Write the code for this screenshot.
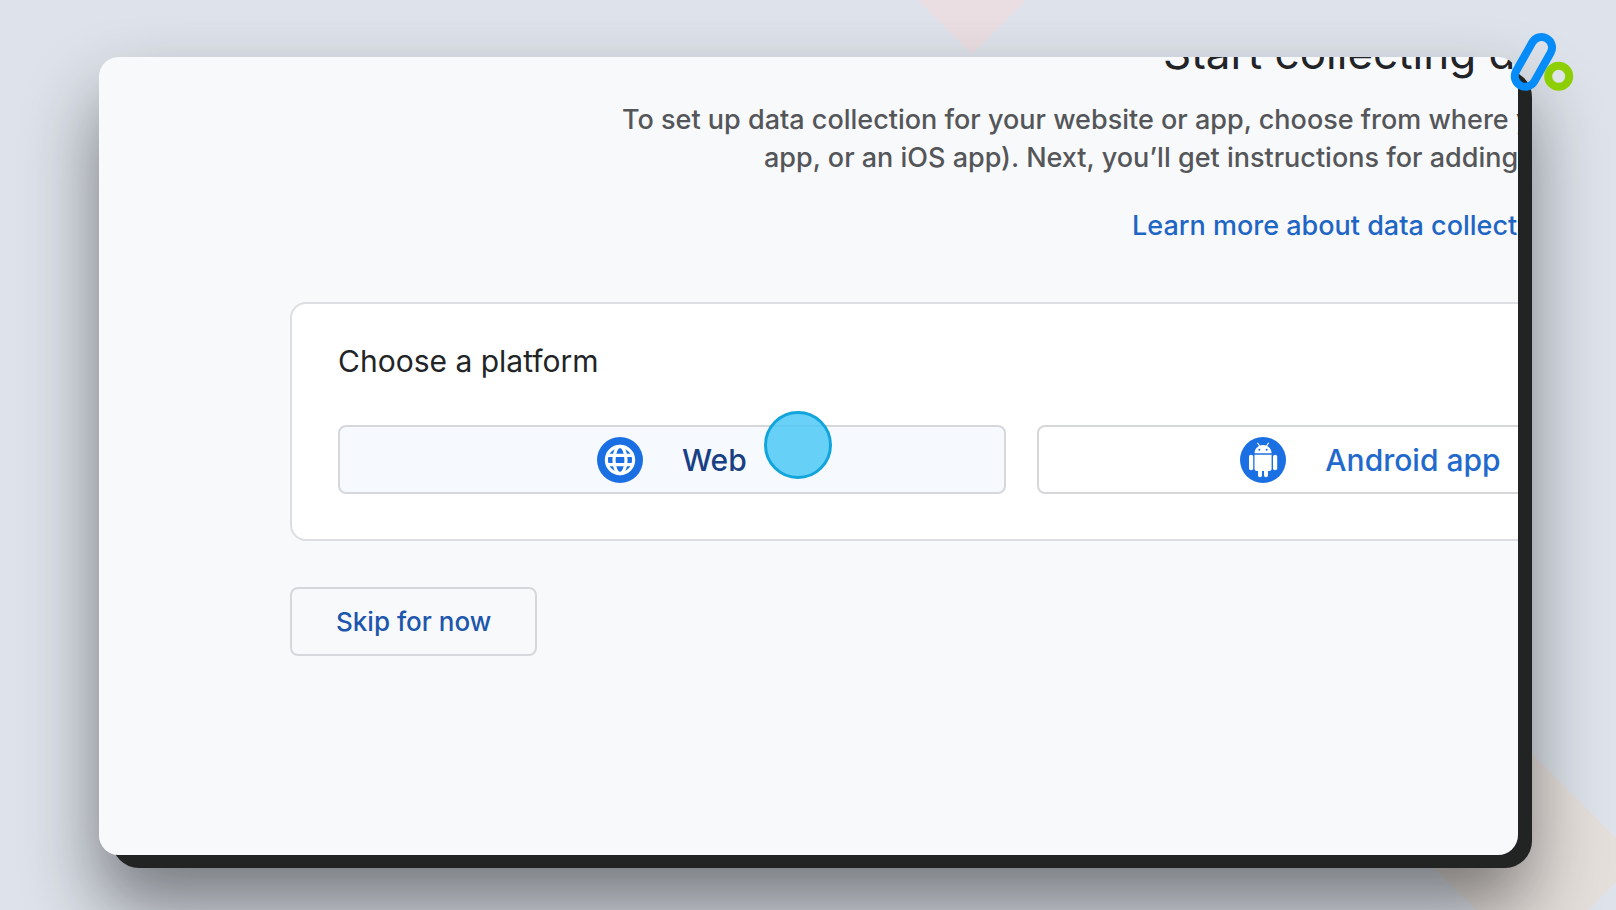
<script>
  const intro = [
    'To set up data collection for your website or app, choose from where y',
    'app, or an iOS app). Next, you’ll get instructions for adding'
  ];
</script>

<div class="stage">
  <span class="diamond rose"></span>
  <span class="diamond sand"></span>

  <div class="frame">
    <main class="window">
      <header>
        <h1>Start collecting d</h1>
        <p><span>{intro[0]}</span><span class="second">{intro[1]}</span></p>
        <a href="#learn">Learn more about data collect</a>
      </header>

      <section class="card" aria-labelledby="platform-title">
        <h2 id="platform-title">Choose a platform</h2>
        <div class="platforms">
          <button class="platform selected" type="button">
            <svg viewBox="0 0 46 46" aria-hidden="true">
              <circle cx="23" cy="23" r="23" fill="#1a6fe3" />
              <g fill="none" stroke="#fff" stroke-width="3.2">
                <circle cx="23" cy="23" r="13.6" />
                <ellipse cx="23" cy="23" rx="6" ry="13.6" />
                <path d="M10 18.3h26M10 27.7h26" />
              </g>
            </svg>
            <span>Web</span>
          </button>
          <button class="platform" type="button">
            <svg viewBox="0 0 46 46" aria-hidden="true">
              <circle cx="23" cy="23" r="23" fill="#1a6fe3" />
              <g fill="#fff">
                <path d="M14.5 16.3C14.7 12.6 16.4 10.2 19 9L17 6.1l.9-.6 2.1 3.1c1.9-.7 4.3-.7 6.2 0l2.1-3.1.9.6L27.2 9c2.6 1.2 4.2 3.6 4.4 7.3z" />
                <path d="M14.5 17.7h17.1v14.4a1.8 1.8 0 0 1-1.8 1.8H28v4.300a2 2 0 0 1-4 0v-4.300h-2v4.300a2 2 0 0 1-4 0v-4.300h-1.700a1.800 1.800 0 0 1-1.800-1.800z" />
                <rect x="9" y="17.7" width="4.2" height="15.5" rx="2" />
                <rect x="33" y="17.7" width="4.2" height="15.5" rx="2" />
              </g>
              <circle cx="19.3" cy="12.8" r="1" fill="#1a6fe3" />
              <circle cx="26.7" cy="12.8" r="1" fill="#1a6fe3" />
            </svg>
            <span>Android app</span>
          </button>
        </div>
      </section>

      <button class="skip" type="button">Skip for now</button>
    </main>
  </div>

  <span class="pointer"></span>

  <svg class="logo" viewBox="0 0 64 60" aria-hidden="true">
    <rect x="-10.5" y="-10.5" width="21" height="54" rx="10.5" transform="translate(31.5 15.5) rotate(29.5)" fill="none" stroke="#058cf8" stroke-width="8" />
    <circle cx="48.7" cy="44.3" r="10.5" fill="#dfe3ea" stroke="#8dcf04" stroke-width="8" />
  </svg>
</div>

<style>
  :global(body) {
    margin: 0;
  }
  .stage {
    position: relative;
    box-sizing: border-box;
    display: flex;
    min-height: 100vh;
    padding: 57px 98px 55px 99px;
    overflow: hidden;
    background: #dee3eb;
    font-family: Inter, sans-serif;
  }
  .diamond {
    position: absolute;
    width: 150px;
    height: 150px;
    transform: rotate(45deg);
  }
  .rose {
    top: -127px;
    left: 897px;
    background: #ebdee2;
  }
  .sand {
    right: 9px;
    bottom: -25px;
    background: #e5dfdb;
  }
  .frame {
    position: relative;
    display: flex;
    flex: 1;
    min-width: 0;
    border-radius: 20px;
    box-shadow: 5px 46px 76px 5px rgba(0, 0, 0, 0.48);
  }
  .frame::before {
    content: '';
    position: absolute;
    inset: 13px -14px -13px 13px;
    border-radius: 27px;
    background: #222323;
  }
  .window {
    position: relative;
    flex: 1;
    min-width: 0;
    overflow: hidden;
    border-radius: 20px;
    background: #f8f9fb;
  }
  header {
    white-space: nowrap;
    color: #545659;
    font-size: 27px;
    font-weight: 500;
    line-height: 38px;
  }
  h1 {
    margin: -32px 0 0 1064px;
    color: #222427;
    font-size: 44px;
    font-weight: 400;
    line-height: 56px;
  }
  p {
    display: grid;
    margin: 20px 0 0 523px;
  }
  .second {
    padding-left: 142px;
  }
  a {
    display: block;
    margin: 30px 0 0 1033px;
    color: #1f66c4;
    text-decoration: none;
  }
  .card {
    box-sizing: border-box;
    width: calc(152% + 4px);
    margin: 57px 0 0 191px;
    padding: 37px 46px 45px;
    border: 2px solid #dcdee1;
    border-radius: 16px;
    background: #fff;
  }
  h2 {
    margin: 0 0 44px;
    color: #222427;
    font-size: 30px;
    font-weight: 400;
    line-height: 40px;
  }
  .platforms {
    display: grid;
    grid-template-columns: repeat(3, 1fr);
    gap: 31px;
  }
  button {
    box-sizing: border-box;
    height: 69px;
    border: 2px solid #d5d7db;
    border-radius: 8px;
    background: transparent;
    font-family: inherit;
    font-weight: 500;
  }
  .platform {
    display: flex;
    align-items: center;
    justify-content: center;
    gap: 39px;
    color: #2269cd;
    font-size: 30px;
  }
  .platform svg {
    width: 46px;
    height: 46px;
  }
  .selected {
    background: #f6faff;
    color: #193f84;
  }
  .skip {
    margin: 46px 0 0 191px;
    padding: 0 44px;
    color: #1d56ad;
    font-size: 26px;
  }
  .pointer {
    position: absolute;
    top: 411px;
    left: 764px;
    box-sizing: border-box;
    width: 68px;
    height: 68px;
    border: 3px solid #12a5dc;
    border-radius: 50%;
    background: rgba(67, 197, 245, 0.8);
  }
  .logo {
    position: absolute;
    top: 32px;
    right: 42px;
    width: 64px;
    height: 60px;
  }
</style>
